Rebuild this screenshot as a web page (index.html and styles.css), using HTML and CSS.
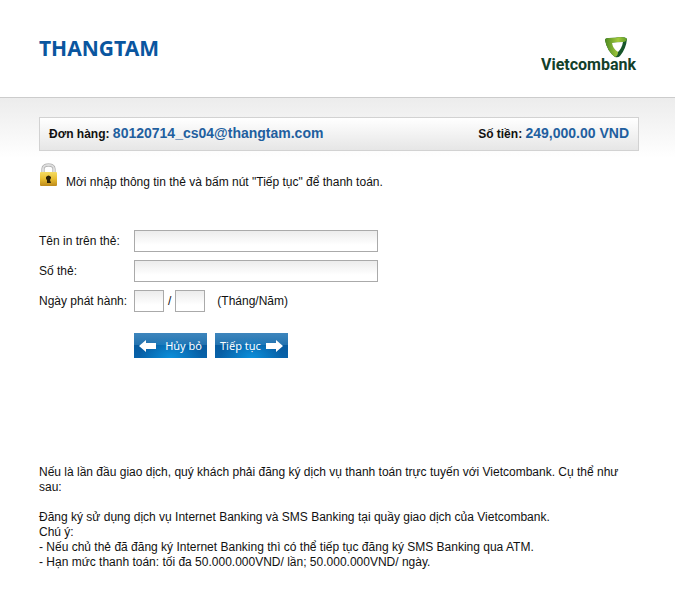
FILE: index.html
```html
<!DOCTYPE html>
<html lang="vi">
<head>
  <meta charset="UTF-8">
  <meta name="viewport" content="width=device-width, initial-scale=1.0">
  <title>Vietcombank</title>
  <link rel="stylesheet" href="styles.css">
</head>
<body>

  <header class="header">
    <h1>THANGTAM</h1>
    <div class="logo">
      <svg class="logo-mark" viewBox="0 0 22 21" aria-hidden="true">
        <defs>
          <linearGradient id="leaf" x1="0" y1="0" x2="1" y2="0">
            <stop offset="0" stop-color="#4d8a22"/>
            <stop offset="0.6" stop-color="#a2c93c"/>
            <stop offset="1" stop-color="#5c9b28"/>
          </linearGradient>
        </defs>
        <path d="M0 3Q0 1 4 1Q11 1 15 0Q21 0 22 2Q21 12 15 19Q13 21 10 20Q2 14 0 3Z" fill="#17562a"/>
        <path d="M0 3Q0 1 4 1Q11 1 15 0Q21 0 22 2Q21 5 18 5L7 6L13 15Q13 19 10 20Q2 14 0 3Z" fill="url(#leaf)"/>
        <path d="M7 6Q12 5 18 5Q17 11 13 15Q8 12 7 6Z" fill="#fff"/>
      </svg>
      <span class="logo-text">Vietcombank</span>
    </div>
  </header>

  <main class="content">
    <div class="order">
      <div>Đơn hàng: <strong>80120714_cs04@thangtam.com</strong></div>
      <div>Số tiền: <strong>249,000.00 VND</strong></div>
    </div>

    <div class="notice">
      <svg class="lock" viewBox="0 0 20 24" aria-hidden="true">
        <defs>
          <linearGradient id="gold" x1="0" y1="0" x2="0" y2="1">
            <stop offset="0" stop-color="#f5dc62"/>
            <stop offset="0.5" stop-color="#e8bd30"/>
            <stop offset="1" stop-color="#bd8a1c"/>
          </linearGradient>
        </defs>
        <path d="M4 11V6Q4 2 9.500 2T15 6V11" fill="none" stroke="#999" stroke-width="3"/>
        <path d="M4 11V6Q4 2 9.500 2T15 6V11" fill="none" stroke="#ddd" stroke-width="2"/>
        <rect x="1" y="9" width="17" height="14" rx="1" fill="url(#gold)"/>
        <path d="M7 14Q9.500 11 12 14V15L11 17L12 20H8V17L7 16Z" fill="#2b2108"/>
      </svg>
      <p>Mời nhập thông tin thẻ và bấm nút "Tiếp tục" để thanh toán.</p>
    </div>

    <form class="card-form">
      <label for="card-name">Tên in trên thẻ:</label>
      <input type="text" id="card-name">

      <label for="card-number">Số thẻ:</label>
      <input type="text" id="card-number">

      <label for="issue-month">Ngày phát hành:</label>
      <div class="issue-date">
        <input type="text" id="issue-month" maxlength="2">
        <span>/</span>
        <input type="text" id="issue-year" maxlength="2" aria-label="Năm">
        <span class="hint">(Tháng/Năm)</span>
      </div>

      <div class="btns">
        <button type="button">
          <svg class="arrow" viewBox="0 0 17 12" aria-hidden="true"><path d="M0 6L7 0V3H17V9H7V12Z" fill="#fff"/></svg>
          Hủy bỏ
        </button>
        <button type="submit">
          Tiếp tục
          <svg class="arrow" viewBox="0 0 17 12" aria-hidden="true"><path d="M17 6L10 0V3H0V9H10V12Z" fill="#fff"/></svg>
        </button>
      </div>
    </form>

    <div class="info">
      <p>Nếu là lần đầu giao dịch, quý khách phải đăng ký dịch vụ thanh toán trực tuyến với Vietcombank. Cụ thể như sau:</p>
      <p>Đăng ký sử dụng dịch vụ Internet Banking và SMS Banking tại quầy giao dịch của Vietcombank.<br>
        Chú ý:<br>
        - Nếu chủ thẻ đã đăng ký Internet Banking thì có thể tiếp tục đăng ký SMS Banking qua ATM.<br>
        - Hạn mức thanh toán: tối đa 50.000.000VND/ lần; 50.000.000VND/ ngày.</p>
    </div>
  </main>

</body>
</html>
```
FILE: styles.css
```css
* {
  box-sizing: border-box;
  margin: 0;
  padding: 0;
}

body {
  font-family: "Liberation Sans", Arial, sans-serif;
  font-size: 12px;
  line-height: 15px;
  color: #111;
  background: #fff;
}

.header {
  display: flex;
  justify-content: space-between;
  align-items: flex-start;
  height: 98px;
  padding: 36px 39px 0;
  border-bottom: 1px solid #ccc;
}

h1 {
  font-family: "Noto Sans", Tahoma, sans-serif;
  font-size: 21px;
  line-height: 24px;
  color: #0a569f;
}

.logo {
  display: flex;
  flex-direction: column;
}

.logo-mark {
  width: 22px;
  height: 21px;
  margin-top: 1px;
  margin-right: 9px;
  align-self: flex-end;
}

.logo-text {
  font-family: Roboto, sans-serif;
  font-size: 16px;
  line-height: 14px;
  font-weight: bold;
  color: #12402a;
}

.content {
  padding: 19px 36px 40px 39px;
  background: linear-gradient(#ececec, #fff 60px);
}

.order {
  display: flex;
  justify-content: space-between;
  padding: 8px 9px;
  border: 1px solid #d2d2d2;
  background: linear-gradient(#fff, #e6e6e6);
  font-weight: bold;
}

.order strong {
  font-size: 14px;
  color: #1f5f9f;
}

.notice {
  display: flex;
  align-items: flex-end;
  gap: 7px;
  margin-top: 12px;
}

.lock {
  width: 20px;
  height: 24px;
}

.notice p {
  line-height: 10px;
}

.card-form {
  display: grid;
  grid-template-columns: 95px 1fr;
  row-gap: 8px;
  align-items: center;
  margin-top: 43px;
}

.card-form input {
  width: 244px;
  height: 22px;
  padding: 0 4px;
  border: 1px solid #aaa;
  background: linear-gradient(#ececec, #fff 14px);
  font: inherit;
}

.issue-date {
  display: flex;
  align-items: center;
  gap: 4px;
}

.issue-date input {
  width: 30px;
}

.hint {
  margin-left: 8px;
}

.btns {
  grid-column: 2;
  display: flex;
  gap: 8px;
  margin-top: 13px;
}

.btns button {
  display: flex;
  align-items: center;
  justify-content: space-between;
  width: 73px;
  height: 25px;
  padding: 0 5px;
  border: none;
  background: radial-gradient(ellipse at 50% 100%, #0b8fda, transparent 60%), linear-gradient(#3e86bd, #2272af 50%, #075b9f 50%, #0762aa);
  color: #fff;
  font-family: "Noto Sans", Tahoma, sans-serif;
  font-size: 11px;
  white-space: nowrap;
  cursor: pointer;
}

.arrow {
  flex: none;
  width: 17px;
  height: 12px;
}

.info {
  margin-top: 107px;
}

.info p {
  margin-bottom: 15px;
}
```
